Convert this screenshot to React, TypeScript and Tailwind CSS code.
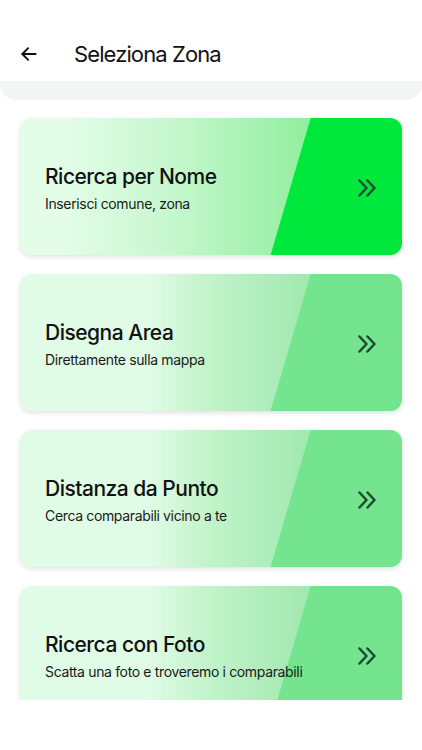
import React from 'react';

interface Zone {
  title: string;
  subtitle: string;
  active?: boolean;
}

const zones: Zone[] = [
  { title: 'Ricerca per Nome', subtitle: 'Inserisci comune, zona', active: true },
  { title: 'Disegna Area', subtitle: 'Direttamente sulla mappa' },
  { title: 'Distanza da Punto', subtitle: 'Cerca comparabili vicino a te' },
  { title: 'Ricerca con Foto', subtitle: 'Scatta una foto e troveremo i comparabili' },
];

const BackArrow = () => (
  <svg width="20" height="20" viewBox="0 0 24 24" fill="none" stroke="#111" strokeWidth="2.2" strokeLinecap="round" strokeLinejoin="round">
    <path d="M20 12H4" />
    <path d="M11 5l-7 7 7 7" />
  </svg>
);

const Chevrons = () => (
  <svg width="20" height="18" viewBox="0 0 20 18" fill="none" stroke="#1d4a30" strokeWidth="2.5" strokeLinecap="round" strokeLinejoin="round">
    <path d="M2.5 1.5L9.5 9l-7 7.5" />
    <path d="M10.5 1.5L17.5 9l-7 7.5" />
  </svg>
);

const ZoneCard: React.FC<{ zone: Zone }> = ({ zone }) => (
  <div
    className={
      zone.active
        ? 'relative h-[137px] shrink-0 rounded-xl overflow-hidden shadow-[0_2px_5px_rgba(0,0,0,0.12)] bg-[linear-gradient(to_right,#e3fde8_12%,#c6f7cd_40%,#8eee9c_78%)]'
        : 'relative h-[137px] shrink-0 rounded-xl overflow-hidden shadow-[0_2px_5px_rgba(0,0,0,0.12)] bg-[linear-gradient(to_right,#e0fbe6_34%,#c4f4cc_48%,#a3e9b1_74%)]'
    }
  >
    <div
      className={
        zone.active
          ? 'absolute inset-0 bg-[#00e83b] [clip-path:polygon(76.1%_0,100%_0,100%_100%,65.6%_100%)]'
          : 'absolute inset-0 bg-[#74e48e] [clip-path:polygon(76.1%_0,100%_0,100%_100%,65.6%_100%)]'
      }
    />
    <div className="relative h-full flex items-center justify-between pl-[25px] pr-[25px]">
      <div className="flex flex-col gap-[3px] mt-[4px]">
        <div className="text-[21px] leading-[28px] font-medium text-[#111] tracking-[-0.5px]">{zone.title}</div>
        <div className="text-[14px] leading-[20px] text-[#1a1a1a] tracking-[-0.35px]">{zone.subtitle}</div>
      </div>
      <div className="mt-[3px]">
        <Chevrons />
      </div>
    </div>
  </div>
);

export default function App() {
  return (
    <div className="w-[422px] h-[750px] bg-white flex flex-col font-['Inter','Noto_Sans',sans-serif] overflow-hidden">
      <div className="h-[81px] flex items-end pb-[17px] pl-[19px]">
        <BackArrow />
        <div className="ml-[35px] text-[22px] leading-[28px] text-[#111] tracking-[-0.9px] -mb-[4px]">Seleziona Zona</div>
      </div>
      <div className="h-[19px] bg-[#f3f5f4] rounded-b-2xl" />
      <div className="h-[600px] overflow-hidden flex flex-col gap-[19px] px-[20px] pt-[18px]">
        {zones.map(z => (
          <ZoneCard key={z.title} zone={z} />
        ))}
      </div>
    </div>
  );
}
